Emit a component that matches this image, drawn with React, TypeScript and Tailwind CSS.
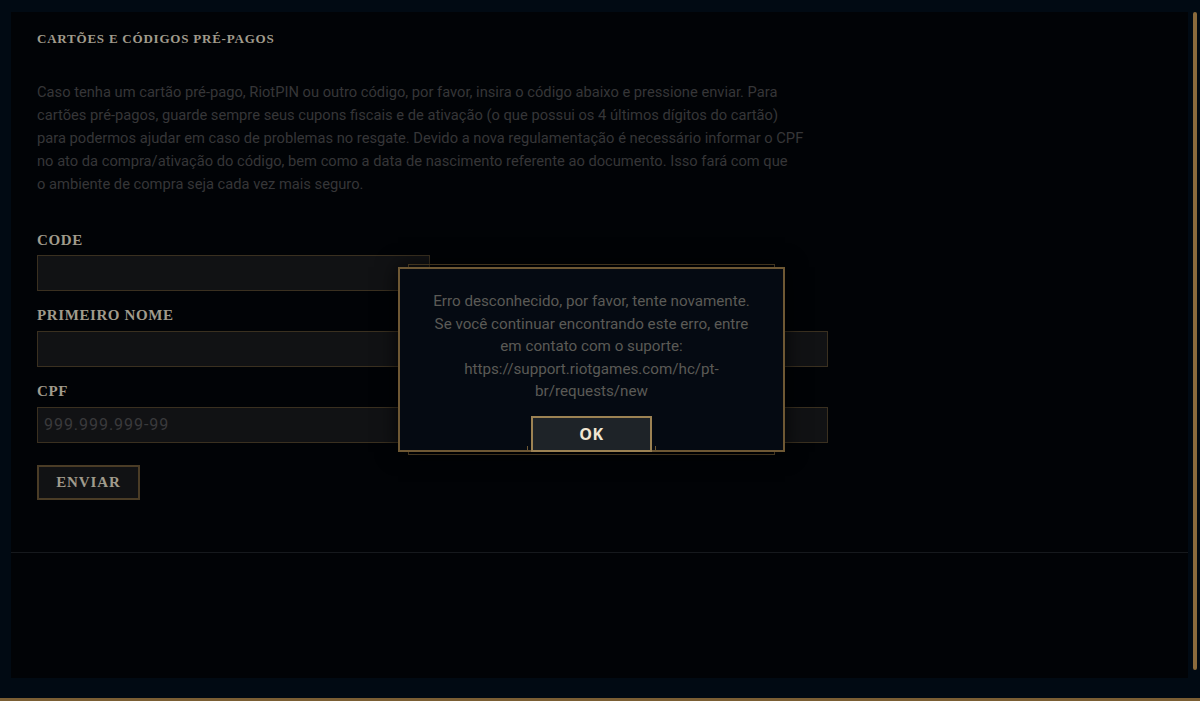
import React from "react";

const serif = { fontFamily: '"Liberation Serif", "DejaVu Serif", serif' };

export default function App() {
  const para = [
    "Caso tenha um cartão pré-pago, RiotPIN ou outro código, por favor, insira o código abaixo e pressione enviar. Para",
    "cartões pré-pagos, guarde sempre seus cupons fiscais e de ativação (o que possui os 4 últimos dígitos do cartão)",
    "para podermos ajudar em caso de problemas no resgate. Devido a nova regulamentação é necessário informar o CPF",
    "no ato da compra/ativação do código, bem como a data de nascimento referente ao documento. Isso fará com que",
    "o ambiente de compra seja cada vez mais seguro.",
  ];
  return (
    <div
      className="relative w-[1200px] h-[701px] overflow-hidden bg-[#010a13] flex flex-col"
      style={{ fontFamily: 'Roboto, "Liberation Sans", sans-serif' }}
    >
      <div className="flex flex-1 pt-[12px]">
        <div className="w-[11px]" />
        <main className="flex-1 bg-[#010306] flex flex-col">
          <section className="h-[541px] border-b border-[#16191d] pl-[26px] pt-[19px] flex flex-col items-start">
            <h2
              className="text-[13px] leading-[16px] font-bold tracking-[0.06em] text-[#a09b8c]"
              style={serif}
            >
              CARTÕES E CÓDIGOS PRÉ-PAGOS
            </h2>
            <div className="mt-[34px] text-[14.7px] leading-[23px] text-[#363638]">
              {para.map((l, i) => (
                <div key={i} className="whitespace-nowrap">
                  {l}
                </div>
              ))}
            </div>
            <label
              className="mt-[35px] text-[15px] leading-[18px] font-bold tracking-[0.04em] text-[#a09b8c]"
              style={serif}
            >
              CODE
            </label>
            <div className="mt-[6px] w-[393px] h-[36px] bg-[#111214] border border-[#3a3020]" />
            <label
              className="mt-[15px] text-[15px] leading-[18px] font-bold tracking-[0.04em] text-[#a09b8c]"
              style={serif}
            >
              PRIMEIRO NOME
            </label>
            <div className="mt-[7px] w-[791px] h-[36px] bg-[#111214] border border-[#3a3020]" />
            <label
              className="mt-[15px] text-[15px] leading-[18px] font-bold tracking-[0.04em] text-[#a09b8c]"
              style={serif}
            >
              CPF
            </label>
            <div className="mt-[7px] w-[791px] h-[36px] bg-[#111214] border border-[#3a3020] flex items-center pl-[6px] text-[16px] text-[#3a3a3c] tracking-[0.06em]">
              999.999.999-99
            </div>
            <button
              className="mt-[22px] w-[103px] h-[35px] bg-[#111214] border-2 border-[#4a3c26] text-[15px] font-bold tracking-[0.06em] text-[#a09b8c]"
              style={serif}
            >
              ENVIAR
            </button>
          </section>
        </main>
        <div className="w-[12px] pl-[5px] pb-[8px]">
          <div className="w-[4px] h-full rounded-[2px] bg-[#8a6a3c]" />
        </div>
      </div>
      <div className="h-[20px] bg-[#010a13]" />
      <div className="h-[3px] bg-[#7a5e34]" />

      {/* modal */}
      <div className="absolute left-[408px] top-[264px] w-[367px] h-[191px] border border-[#5e4b2c]" />
      <div className="absolute left-[398px] top-[267px] w-[387px] h-[185px] bg-[#050a12] border-2 border-[#6e5834] shadow-[0_0_20px_rgba(0,0,0,0.8)] flex flex-col items-center">
        <div className="mt-[21px] text-center text-[15.2px] leading-[22.5px] text-[#5b5a56] w-[350px]">
          <div>Erro desconhecido, por favor, tente novamente.</div>
          <div>Se você continuar encontrando este erro, entre</div>
          <div>em contato com o suporte:</div>
          <div>https://support.riotgames.com/hc/pt-</div>
          <div>br/requests/new</div>
        </div>
        <div className="mt-auto relative flex items-end">
          <div className="w-[3px] h-[4px] border-l border-[#6e5834] mr-[1px]" />
          <button className="w-[121px] h-[36px] mb-[-2px] bg-[#1e2328] border-2 border-[#9c8253] text-[16px] font-bold text-[#f0e6d2] tracking-[0.04em]" style={{ fontFamily: '"Open Sans", "Liberation Sans", sans-serif' }}>
            OK
          </button>
          <div className="w-[3px] h-[4px] border-r border-[#6e5834] ml-[1px]" />
        </div>
      </div>
    </div>
  );
}
